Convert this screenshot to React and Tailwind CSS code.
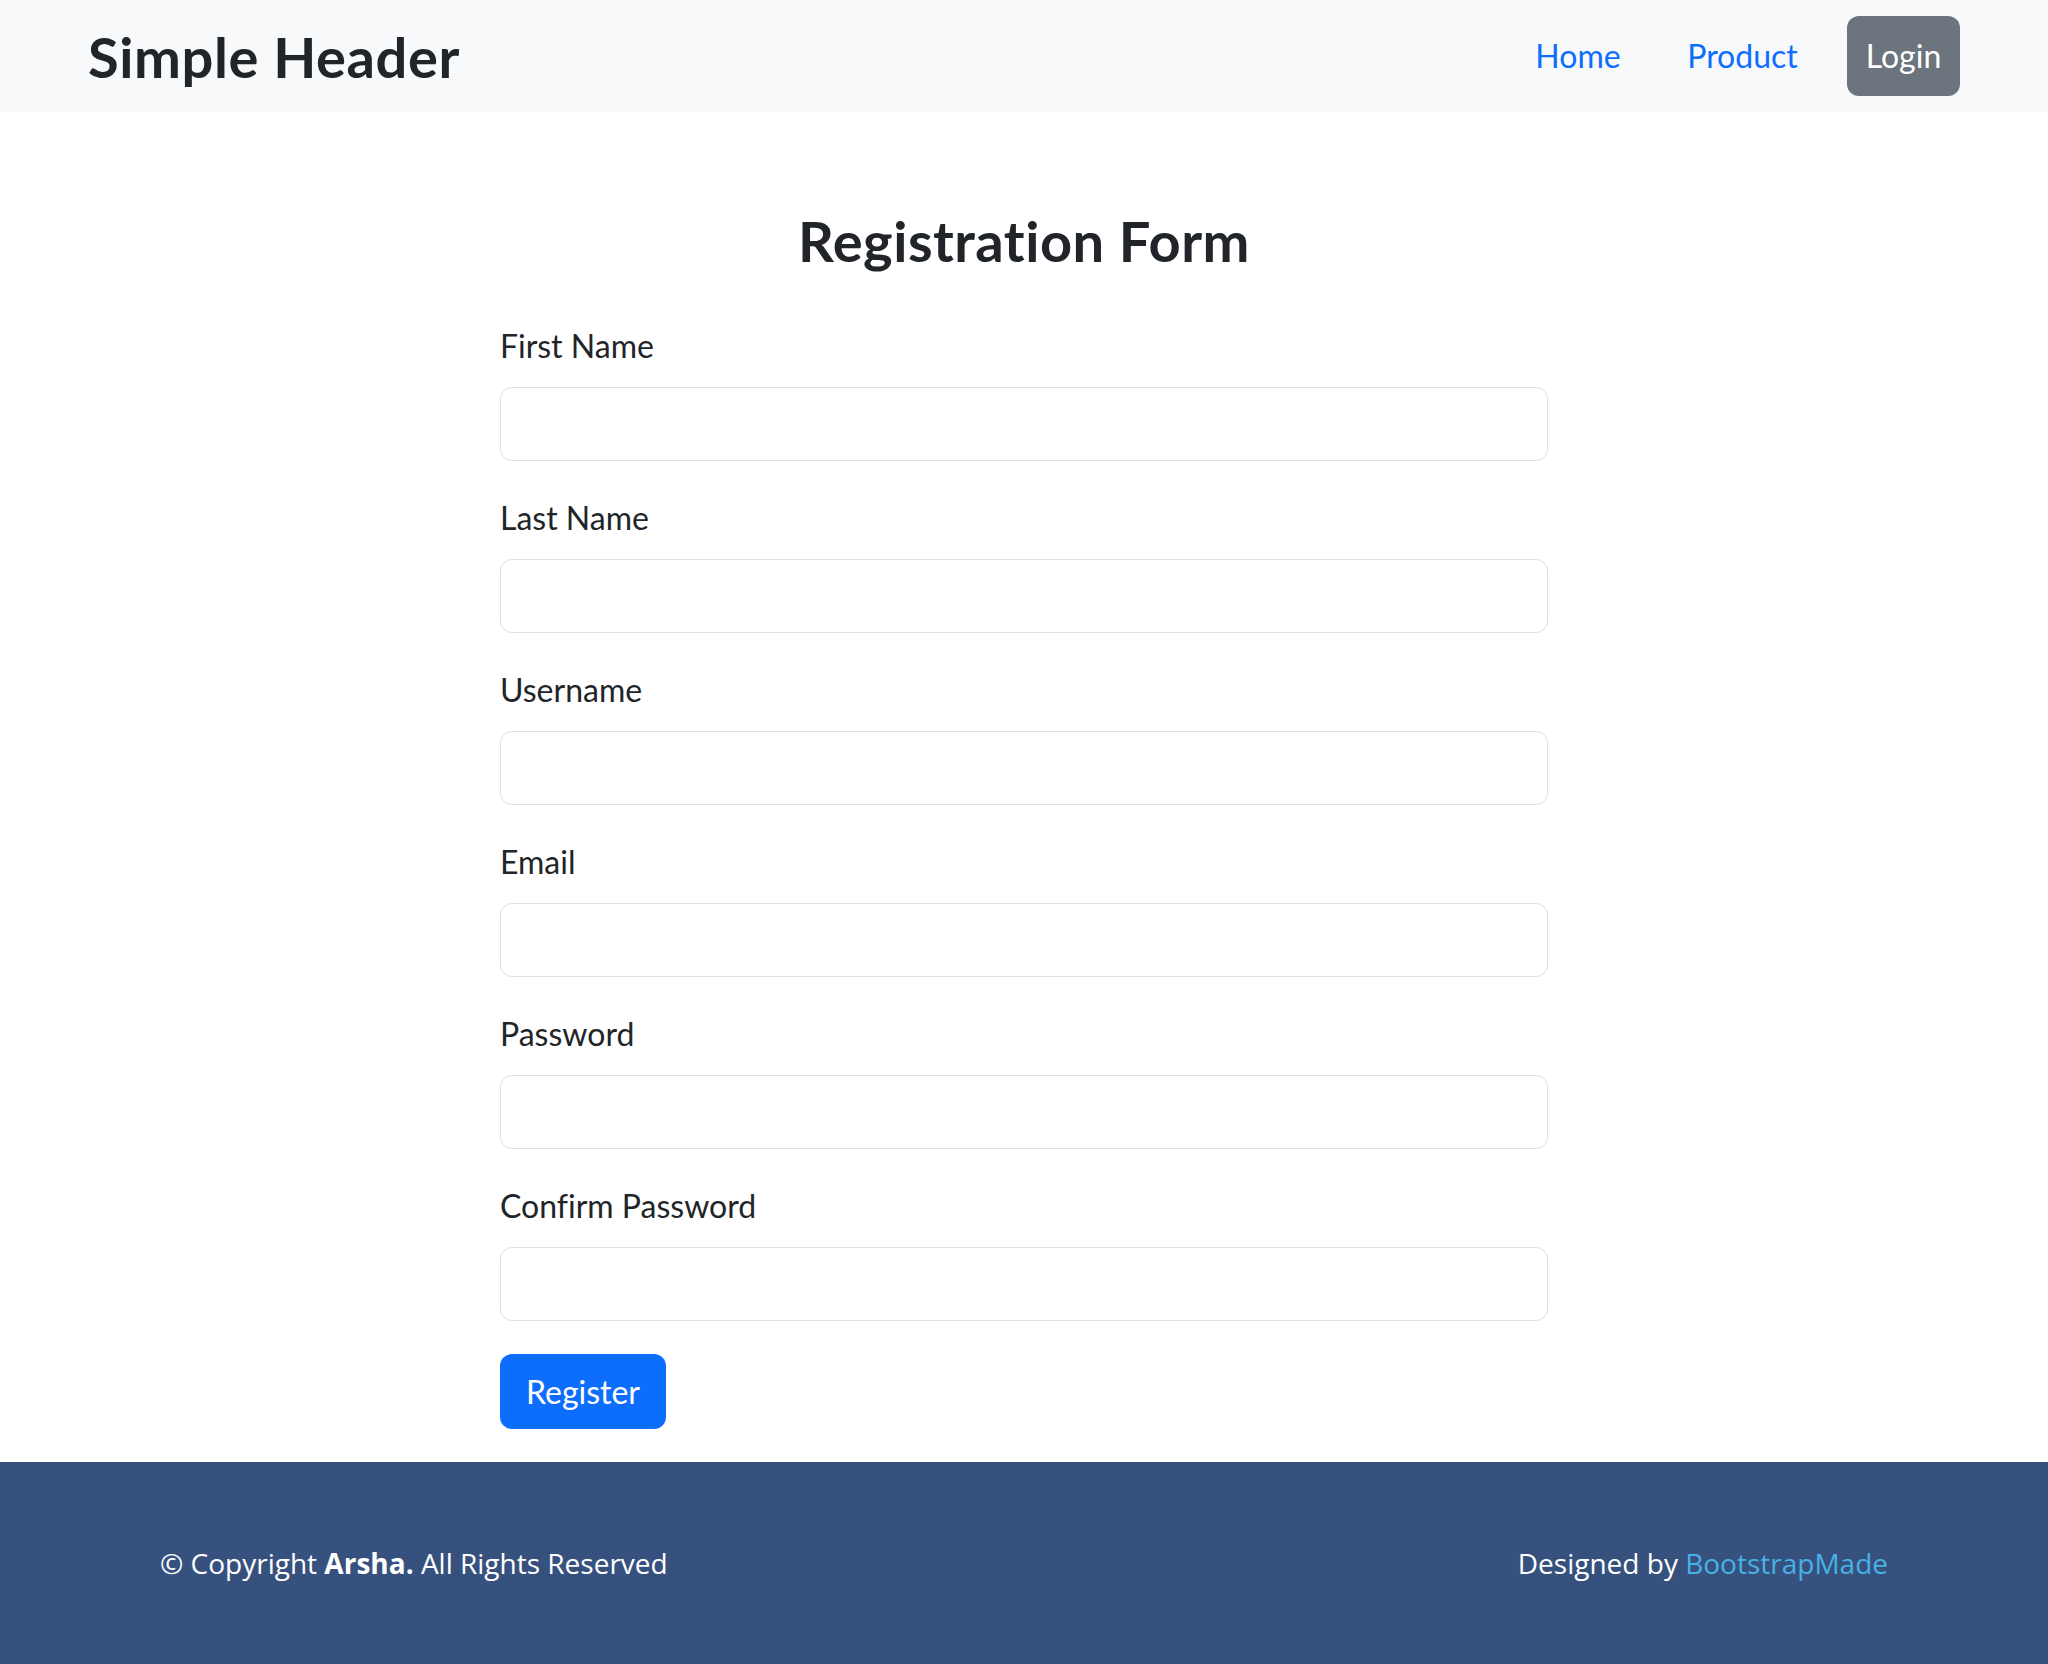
import React from 'react'

const FIELDS = [
  { id: 'firstName', label: 'First Name', type: 'text' },
  { id: 'lastName', label: 'Last Name', type: 'text' },
  { id: 'username', label: 'Username', type: 'text' },
  { id: 'email', label: 'Email', type: 'email' },
  { id: 'password', label: 'Password', type: 'password' },
  { id: 'confirmPassword', label: 'Confirm Password', type: 'password' },
]

function Header() {
  return (
    <header className="h-[112px] bg-[#f8f9fa] px-[88px] flex items-center justify-between">
      <h1 className="text-[56px] leading-[67px] font-bold tracking-[0.6px] text-[#212529]">Simple Header</h1>
      <nav className="flex items-center">
        <a href="#" className="w-[152px] text-center text-[32px] leading-[48px] text-[#0d6efd]">Home</a>
        <a href="#" className="w-[177px] text-center text-[32px] leading-[48px] text-[#0d6efd]">Product</a>
        <button className="ml-[16px] w-[113px] h-[80px] rounded-[12px] bg-[#6c757d] text-white text-[32px] leading-[48px]">
          Login
        </button>
      </nav>
    </header>
  )
}

function Field({ id, label, type }) {
  return (
    <div className="mb-[33px]">
      <label htmlFor={id} className="block mb-[17px] text-[32px] leading-[48px] text-[#212529]">{label}</label>
      <input
        id={id}
        type={type}
        className="block w-full h-[74px] px-[24px] rounded-[12px] border border-[#dee2e6] bg-white text-[32px] text-[#212529] outline-none"
      />
    </div>
  )
}

function Footer() {
  return (
    <footer className="bg-[#37517e] py-[80px] font-['Open_Sans',sans-serif] text-white text-[28px] leading-[42px]">
      <div className="w-[1728px] mx-auto flex justify-between">
        <div>© Copyright <strong className="font-bold">Arsha.</strong> All Rights Reserved</div>
        <div>Designed by <a href="#" className="text-[#47b2e4]">BootstrapMade</a></div>
      </div>
    </footer>
  )
}

export default function App() {
  return (
    <div className="min-h-screen bg-white font-['Lato',sans-serif] [font-variant-ligatures:none]">
      <Header />
      <main className="w-[1048px] mx-auto pt-[95px] pb-[33px]">
        <h2 className="text-center text-[56px] leading-[67px] font-bold tracking-[0.5px] text-[#212529] mb-[48px]">Registration Form</h2>
        <form onSubmit={e => e.preventDefault()}>
          {FIELDS.map(f => <Field key={f.id} {...f} />)}
          <button type="submit" className="w-[166px] h-[75px] rounded-[12px] bg-[#0d6efd] text-white text-[32px] leading-[48px]">
            Register
          </button>
        </form>
      </main>
      <Footer />
    </div>
  )
}
